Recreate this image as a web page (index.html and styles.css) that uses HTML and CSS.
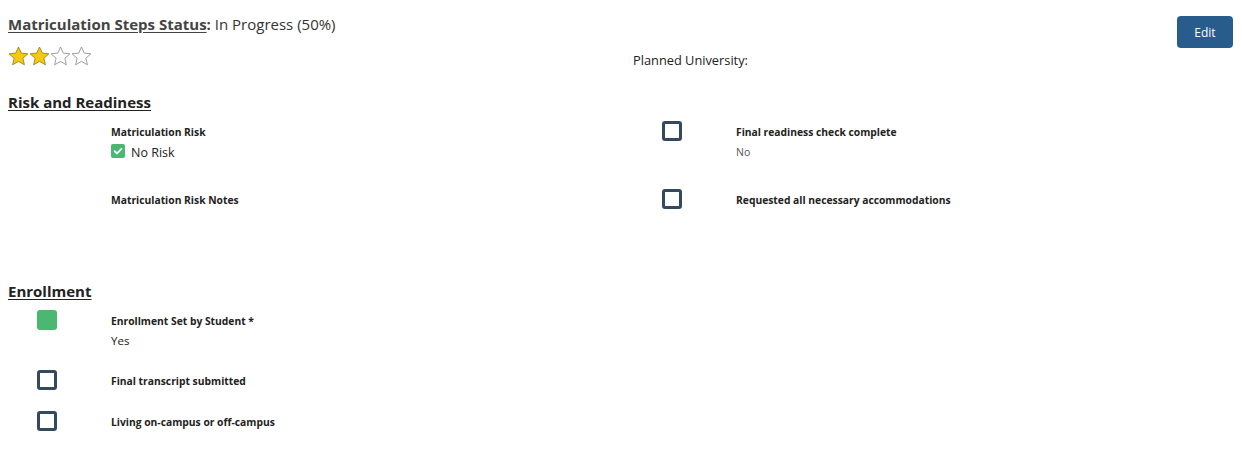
FILE: index.html
```
<!DOCTYPE html>
<html lang="en">
<head>
<meta charset="utf-8">
<title>Matriculation Steps</title>
<link rel="stylesheet" href="styles.css">
</head>
<body>
<div class="page">
  <div class="header">
    <div class="status"><span class="status-title"><span class="ul">Matriculation Steps Status</span>:</span> In Progress (50%)</div>
    <button class="edit" type="button">Edit</button>
    <div class="stars">
      <svg width="86" height="21" viewBox="0 0 86 21">
        <defs>
          <path id="star" d="M10.5 1 L13.3 7.1 L19.9 7.8 L14.9 12.2 L16.4 18.8 L10.5 15.4 L4.6 18.8 L6.1 12.2 L1.1 7.8 L7.7 7.1 Z"/>
        </defs>
        <use href="#star" x="0" fill="#f6c90e" stroke="#9c8420" stroke-width="0.9"/>
        <use href="#star" x="21" fill="#f6c90e" stroke="#9c8420" stroke-width="0.9"/>
        <use href="#star" x="42" fill="#ffffff" stroke="#939393" stroke-width="0.9"/>
        <use href="#star" x="63" fill="#ffffff" stroke="#939393" stroke-width="0.9"/>
      </svg>
    </div>
    <div class="planned">Planned University:</div>
  </div>

  <h2 class="section-title">Risk and Readiness</h2>
  <div class="columns risk">
    <div class="col">
      <div class="field">
        <div class="icon-cell"></div>
        <div class="content">
          <div class="label">Matriculation Risk</div>
          <div class="value risk-value">
            <span class="mini-check"><svg width="14" height="14" viewBox="0 0 14 14"><path d="M3.6 7.2 L6 9.5 L10.4 4.8" fill="none" stroke="#fff" stroke-width="1.8" stroke-linecap="round" stroke-linejoin="round"/></svg></span>
            <span>No Risk</span>
          </div>
        </div>
      </div>
      <div class="field">
        <div class="icon-cell"></div>
        <div class="content">
          <div class="label">Matriculation Risk Notes</div>
        </div>
      </div>
    </div>
    <div class="col">
      <div class="field">
        <div class="icon-cell"><span class="box"></span></div>
        <div class="content">
          <div class="label">Final readiness check complete</div>
          <div class="value muted">No</div>
        </div>
      </div>
      <div class="field">
        <div class="icon-cell"><span class="box"></span></div>
        <div class="content">
          <div class="label">Requested all necessary accommodations</div>
        </div>
      </div>
    </div>
  </div>

  <h2 class="section-title">Enrollment</h2>
  <div class="columns enroll">
    <div class="col">
      <div class="field">
        <div class="icon-cell"><span class="box done"></span></div>
        <div class="content">
          <div class="label">Enrollment Set by Student *</div>
          <div class="value">Yes</div>
        </div>
      </div>
      <div class="field">
        <div class="icon-cell"><span class="box"></span></div>
        <div class="content">
          <div class="label">Final transcript submitted</div>
        </div>
      </div>
      <div class="field">
        <div class="icon-cell"><span class="box"></span></div>
        <div class="content">
          <div class="label">Living on-campus or off-campus</div>
        </div>
      </div>
    </div>
  </div>
</div>
</body>
</html>
```
FILE: styles.css
```
* { box-sizing: border-box; }
html, body { margin: 0; padding: 0; background: #fff; }
body {
  font-family: "Open Sans", "Noto Sans", "Liberation Sans", sans-serif;
  color: #222;
}
.page { padding: 14px 9px 20px 8px; }

.header {
  display: grid;
  grid-template-columns: 625px 1fr auto;
  grid-template-rows: 20px 24px;
  row-gap: 10px;
}
.status {
  grid-column: 1 / 3;
  grid-row: 1;
  font-size: 15px;
  line-height: 20px;
  color: #333;
}
.status-title { font-weight: 700; color: #444; }
.ul { text-decoration: underline; text-underline-offset: 2px; }
.edit {
  grid-column: 3;
  grid-row: 1 / 3;
  align-self: start;
  margin-top: 2px;
  width: 56px;
  height: 32px;
  border: none;
  border-radius: 4px;
  background: #275c8c;
  color: #fff;
  font-family: inherit;
  font-size: 12px;
  padding: 0;
}
.stars { grid-column: 1; grid-row: 2; display: flex; align-items: center; }
.stars svg { display: block; margin-top: 1px; }
.planned {
  grid-column: 2; grid-row: 2;
  align-self: end;
  font-size: 12.8px;
  line-height: 16px;
  color: #222;
}

.section-title {
  margin: 23px 0 8px;
  font-size: 15px;
  line-height: 22px;
  font-weight: 700;
  color: #222;
  text-decoration: underline;
  text-underline-offset: 2px;
}

.columns { display: flex; }
.col { width: 625px; flex: none; }
.col + .col { flex: 1; width: auto; }

.field { display: flex; margin-bottom: 20px; }
.risk .field { min-height: 48px; }
.icon-cell { width: 103px; flex: none; padding-left: 29px; }
.box {
  display: block;
  width: 20px; height: 20px;
  border: 3px solid #34495e;
  border-radius: 3px;
  background: #fff;
}
.box.done { background: #4bb872; border: none; }

.content { padding-top: 1px; }
.label {
  font-size: 10.3px;
  line-height: 20px;
  font-weight: 700;
  color: #222;
}
.value {
  font-size: 11.5px;
  line-height: 19px;
  color: #222;
}
.value.muted { font-size: 10.5px; color: #555; line-height: 21px; }
.risk-value {
  display: flex;
  align-items: center;
  gap: 6px;
  font-size: 12.5px;
  line-height: 20px;
  margin-top: 1px;
}
.mini-check {
  display: block;
  width: 14px; height: 14px;
  border-radius: 2px;
  background: #4bb872;
  margin-top: -4px;
}
.mini-check svg { display: block; }
```
